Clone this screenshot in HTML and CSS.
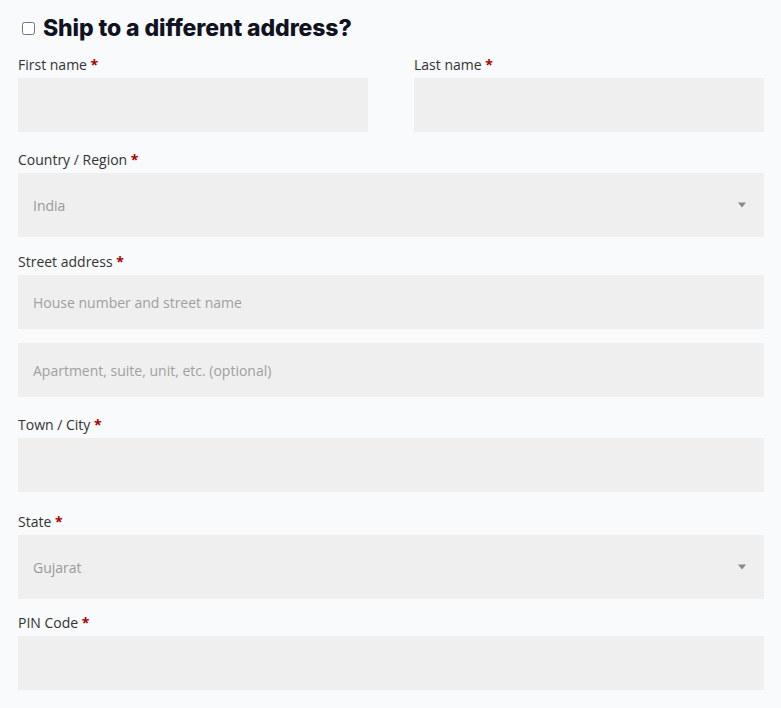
FILE: index.html
```html
<!DOCTYPE html>
<html lang="en">
<head>
  <meta charset="UTF-8" />
  <meta name="viewport" content="width=device-width, initial-scale=1" />
  <title>Shipping address</title>
  <link rel="stylesheet" href="styles.css">
</head>
<body>
  <form class="shipping">
    <h3 class="ship-title">
      <label><input type="checkbox" class="ship-check" /> <span>Ship to a different address?</span></label>
    </h3>

    <div class="row-two">
      <p class="field field-input">
        <label for="first_name">First name <abbr class="required">*</abbr></label>
        <input type="text" id="first_name" />
      </p>
      <p class="field field-input">
        <label for="last_name">Last name <abbr class="required">*</abbr></label>
        <input type="text" id="last_name" />
      </p>
    </div>

    <p class="field field-select">
      <label for="country">Country / Region <abbr class="required">*</abbr></label>
      <span class="select-wrap">
        <select id="country"><option>India</option></select>
        <svg class="arrow" width="10" height="6" viewBox="0 0 10 6"><path d="M1 0.5h8L5 5.5z" fill="#888"/></svg>
      </span>
    </p>

    <p class="field field-input field-tight">
      <label for="address_1">Street address <abbr class="required">*</abbr></label>
      <input type="text" id="address_1" placeholder="House number and street name" />
    </p>
    <p class="field field-input">
      <input type="text" id="address_2" placeholder="Apartment, suite, unit, etc. (optional)" />
    </p>

    <p class="field field-input field-loose">
      <label for="city">Town / City <abbr class="required">*</abbr></label>
      <input type="text" id="city" />
    </p>

    <p class="field field-select field-last-select">
      <label for="state">State <abbr class="required">*</abbr></label>
      <span class="select-wrap">
        <select id="state"><option>Gujarat</option></select>
        <svg class="arrow" width="10" height="6" viewBox="0 0 10 6"><path d="M1 0.5h8L5 5.5z" fill="#888"/></svg>
      </span>
    </p>

    <p class="field field-input">
      <label for="postcode">PIN Code <abbr class="required">*</abbr></label>
      <input type="text" id="postcode" />
    </p>
  </form>
</body>
</html>
```

FILE: styles.css
```css
body {
  margin: 0;
  background-color: #f8fafb;
  font-family: 'Open Sans', 'Noto Sans', sans-serif;
  color: #333;
}
.shipping {
  padding: 13px 17px 0 18px;
}
.ship-title {
  margin: 0 0 11px;
  font-family: Inter, 'Noto Sans', sans-serif;
  font-size: 23px;
  font-weight: 800;
  line-height: 30px;
  color: #101322;
  letter-spacing: -0.1px;
}
.ship-title label {
  display: flex;
  align-items: center;
  gap: 8px;
}
.ship-check {
  width: 13px;
  height: 13px;
  margin: 0 0 0 4px;
}
.row-two {
  display: grid;
  grid-template-columns: 1fr 1fr;
  column-gap: 46px;
}
.field {
  margin: 0 0 17px;
}
.field-select {
  margin-bottom: 14px;
}
.field-tight {
  margin-bottom: 14px;
}
.field-loose {
  margin-bottom: 19px;
}
.field-last-select {
  margin-bottom: 13px;
}
.field label {
  display: block;
  font-size: 14px;
  line-height: 21px;
  margin-bottom: 3px;
  color: #333;
}
.required {
  color: #a00;
  font-weight: 700;
  text-decoration: none;
  border: none;
}
.field input,
.field select {
  display: block;
  box-sizing: border-box;
  width: 100%;
  border: none;
  background-color: #efefef;
  font-family: 'Open Sans', 'Noto Sans', sans-serif;
  font-size: 14px;
  color: #999;
  padding: 0 15px;
  outline: none;
}
.field input {
  height: 54px;
}
.field input::placeholder {
  color: #a0a0a0;
}
.select-wrap {
  position: relative;
  display: block;
}
.field select {
  height: 64px;
  appearance: none;
  -webkit-appearance: none;
  border-radius: 0;
}
.arrow {
  position: absolute;
  right: 17px;
  top: 29px;
}
```
